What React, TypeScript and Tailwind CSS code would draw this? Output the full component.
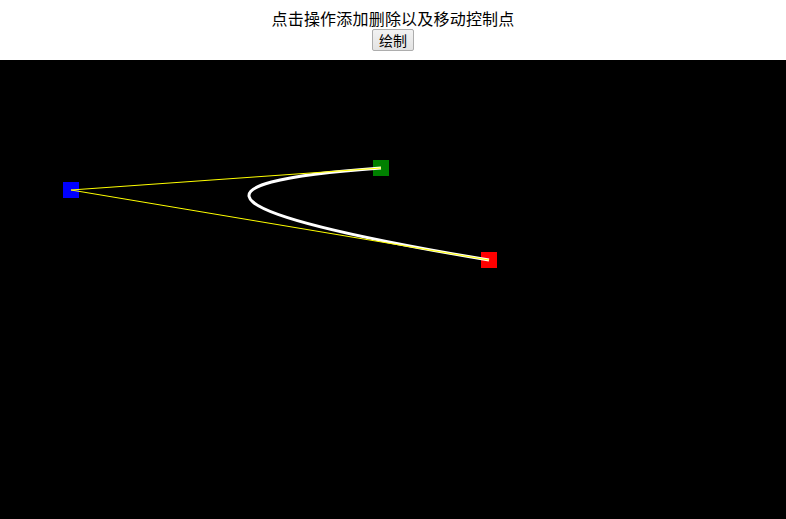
const G = { x: 381, y: 108 };
const B = { x: 71, y: 130 };
const R = { x: 489, y: 200 };

export default function App() {
  const pts = [
    { p: B, c: "#0000ff" },
    { p: G, c: "#008000" },
    { p: R, c: "#ff0000" },
  ];
  return (
    <div className="w-[786px] h-[519px] overflow-hidden bg-white font-['Noto_Sans_CJK_SC',sans-serif] text-black">
      <div className="h-[60px] flex flex-col items-center pt-[7px]">
        <div className="text-[16px] leading-[22px] h-[22px] tracking-[0.2px]">点击操作添加删除以及移动控制点</div>
        <button className="w-[42px] h-[22px] text-[14px] leading-[18px] bg-gradient-to-b from-[#f2f2f2] to-[#e3e3e3] border border-[#adadad] rounded-[2px]">
          绘制
        </button>
      </div>
      <svg width="786" height="459" className="block bg-black">
        {pts.map(({ p, c }) => (
          <rect key={c} x={p.x - 8} y={p.y - 8} width="16" height="16" fill={c} />
        ))}
        <path
          d={`M${G.x} ${G.y} Q${B.x} ${B.y} ${R.x} ${R.y}`}
          fill="none"
          stroke="#ffffff"
          strokeWidth="3"
        />
        <line x1={B.x} y1={B.y} x2={G.x} y2={G.y} stroke="#ffff00" strokeWidth="1" />
        <line x1={B.x} y1={B.y} x2={R.x} y2={R.y} stroke="#ffff00" strokeWidth="1" />
      </svg>
    </div>
  );
}
